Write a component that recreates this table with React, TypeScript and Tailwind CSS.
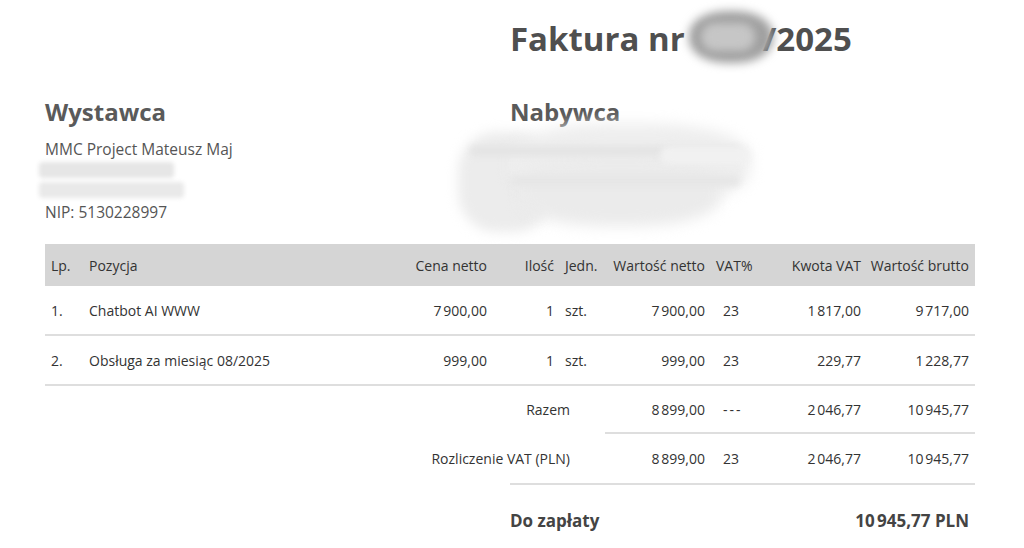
const NB = "\u202F";

type Item = { lp: string; name: string; price: string; qty: string; unit: string; net: string; vat: string; vatAmt: string; gross: string };

const items: Item[] = [
  { lp: "1.", name: "Chatbot AI WWW", price: `7${NB}900,00`, qty: "1", unit: "szt.", net: `7${NB}900,00`, vat: "23", vatAmt: `1${NB}817,00`, gross: `9${NB}717,00` },
  { lp: "2.", name: "Obsługa za miesiąc 08/2025", price: "999,00", qty: "1", unit: "szt.", net: "999,00", vat: "23", vatAmt: "229,77", gross: `1${NB}228,77` },
];

const cols = "grid grid-cols-[38px_317px_93px_67px_40px_111px_49px_107px_108px]";

export default function App() {
  return (
    <div className="min-h-[548px] bg-white font-['Open_Sans',sans-serif] text-[#3a3a3a]">
      {/* Title */}
      <div className="pl-[510px] pt-[17px]">
        <h1 className="relative inline-flex items-center text-[33px] font-bold leading-[44px] text-[#4f4f4f]">
          <span>Faktura nr</span>
          <span className="relative ml-[6px] mr-[-4px] inline-block h-[44px] w-[76px]">
            <span className="absolute left-[-2px] top-[-6px] h-[52px] w-[84px] rounded-[45%] bg-[#a0a0a0] blur-[5px]" />
            <span className="absolute left-[10px] top-[6px] h-[28px] w-[54px] rounded-full bg-[#c6c6c6] blur-[4px]" />
          </span>
          <span>/2025</span>
        </h1>
      </div>

      {/* Parties */}
      <div className="mt-[35px] grid grid-cols-[465px_1fr] pl-[45px]">
        <div>
          <h2 className="text-[24px] font-bold leading-[32px] text-[#5a5a5a]">Wystawca</h2>
          <p className="mt-[10px] text-[15.5px] leading-[22px] text-[#555]">MMC Project Mateusz Maj</p>
          <div className="relative h-[41px]">
            <span className="absolute left-[-6px] top-[2px] h-[16px] w-[135px] rounded-[4px] bg-[#e6e6e6] blur-[2px]" />
            <span className="absolute left-[-6px] top-[22px] h-[16px] w-[145px] rounded-[4px] bg-[#e9e9e9] blur-[2px]" />
          </div>
          <p className="text-[15.5px] leading-[22px] text-[#555]">NIP: 5130228997</p>
        </div>
        <div className="relative">
          <h2 className="text-[24px] font-bold leading-[32px] text-[#5a5a5a]">Nabywca</h2>
          <span className="absolute left-[-52px] top-[36px] h-[100px] w-[95px] rounded-[40%] bg-[#ececec] blur-[6px]" />
          <span className="absolute left-[0px] top-[28px] h-[80px] w-[240px] rounded-[40%] bg-[#eeeeee] blur-[7px]" />
          <span className="absolute left-[10px] top-[60px] h-[70px] w-[200px] rounded-[40%] bg-[#ebebeb] blur-[7px]" />
          <span className="absolute left-[-40px] top-[50px] h-[10px] w-[270px] rounded-full bg-[#e4e4e4] blur-[3px]" />
          <span className="absolute left-[0px] top-[80px] h-[10px] w-[230px] rounded-full bg-[#e6e6e6] blur-[3px]" />
          <span className="absolute left-[150px] top-[50px] h-[18px] w-[90px] rounded-full bg-[#f1f1f1] blur-[3px]" />
        </div>
      </div>

      {/* Table */}
      <div className="ml-[45px] mt-[21px] w-[930px] text-[14px] text-[#333]">
        <div className={`${cols} h-[42px] items-center whitespace-nowrap bg-[#d5d5d5]`}>
          <div className="px-[6px]">Lp.</div>
          <div className="px-[6px]">Pozycja</div>
          <div className="px-[6px] text-right">Cena netto</div>
          <div className="px-[6px] text-right">Ilość</div>
          <div className="px-[5px]">Jedn.</div>
          <div className="px-[6px] text-right">Wartość netto</div>
          <div className="px-[5px]">VAT%</div>
          <div className="px-[6px] text-right">Kwota VAT</div>
          <div className="flex justify-end px-[6px]">Wartość brutto</div>
        </div>
        {items.map((it) => (
          <div key={it.lp} className={`${cols} h-[50px] items-center border-b-2 border-[#dedede]`}>
            <div className="px-[6px]">{it.lp}</div>
            <div className="px-[6px]">{it.name}</div>
            <div className="px-[6px] text-right">{it.price}</div>
            <div className="px-[6px] text-right">{it.qty}</div>
            <div className="px-[5px]">{it.unit}</div>
            <div className="px-[6px] text-right">{it.net}</div>
            <div className="px-[5px] pl-[12px]">{it.vat}</div>
            <div className="px-[6px] text-right">{it.vatAmt}</div>
            <div className="px-[6px] text-right">{it.gross}</div>
          </div>
        ))}

        {/* Summary */}
        <div className={`${cols} h-[46px] items-center`}>
          <div className="col-span-5 pr-[30px] text-right">Razem</div>
          <div className="px-[6px] text-right">8{NB}899,00</div>
          <div className="px-[5px] pl-[12px] tracking-[2px]">---</div>
          <div className="px-[6px] text-right">2{NB}046,77</div>
          <div className="px-[6px] text-right">10{NB}945,77</div>
        </div>
        <div className="ml-[560px] h-[2px] bg-[#dedede]" />
        <div className={`${cols} h-[49px] items-center`}>
          <div className="col-span-5 pr-[30px] text-right">Rozliczenie VAT (PLN)</div>
          <div className="px-[6px] text-right">8{NB}899,00</div>
          <div className="px-[5px] pl-[12px]">23</div>
          <div className="px-[6px] text-right">2{NB}046,77</div>
          <div className="px-[6px] text-right">10{NB}945,77</div>
        </div>
        <div className="ml-[465px] h-[2px] bg-[#dedede]" />

        <div className="ml-[465px] mt-[24px] flex items-center justify-between pr-[6px] text-[17px] font-bold leading-[24px] text-[#444]">
          <span>Do zapłaty</span>
          <span>10{NB}945,77 PLN</span>
        </div>
      </div>
    </div>
  );
}
